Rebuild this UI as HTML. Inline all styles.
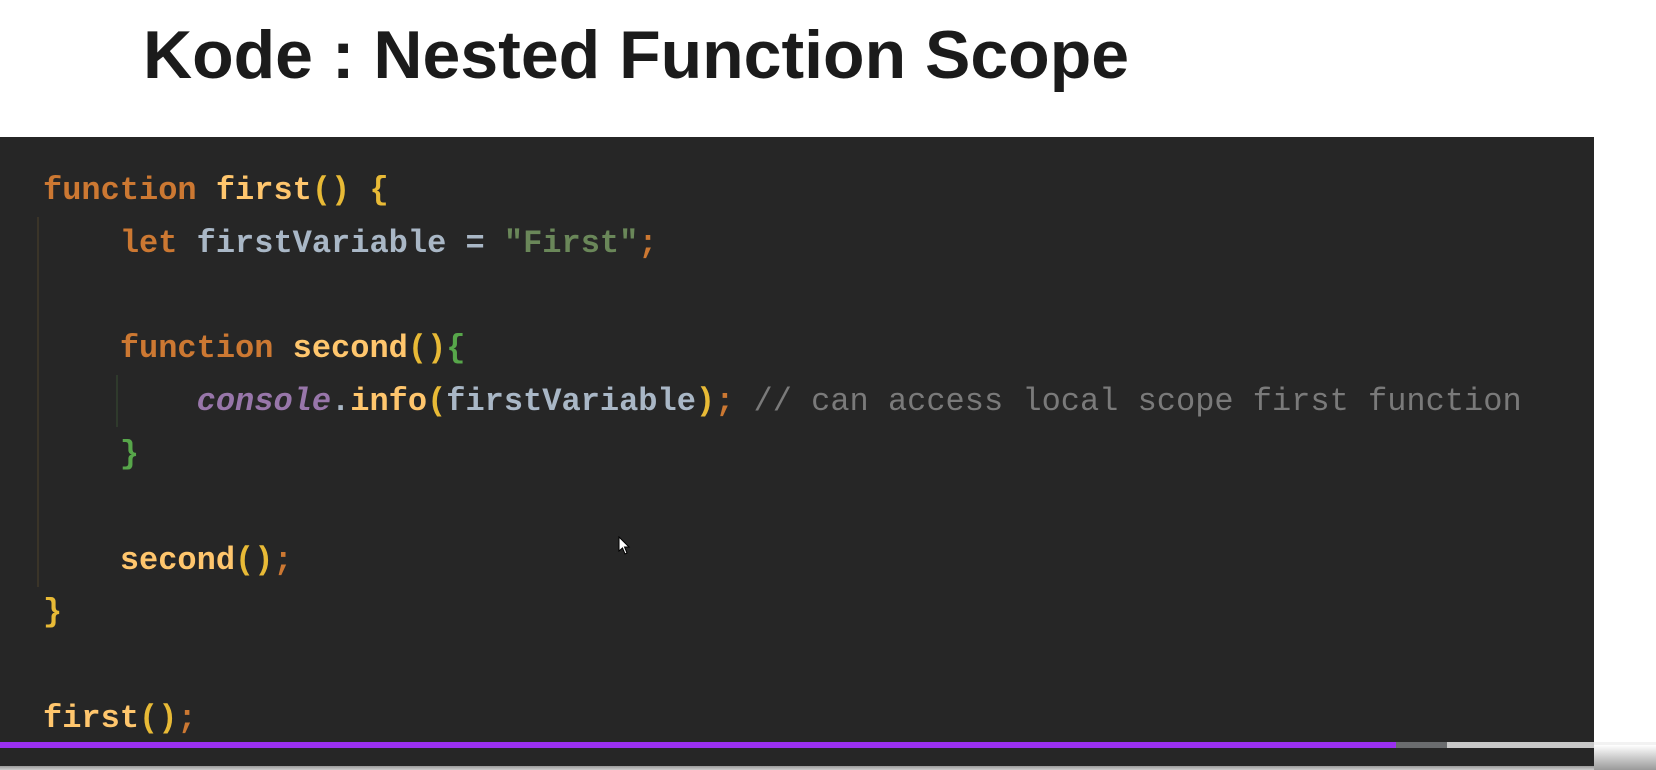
<!DOCTYPE html>
<html><head><meta charset="utf-8"><style>
html,body{margin:0;padding:0;}
body{width:1656px;height:770px;background:#fff;position:relative;overflow:hidden;font-family:"Liberation Sans",sans-serif;}
.title{position:absolute;left:143px;top:14px;font-size:68px;font-weight:bold;color:#1b1b1b;line-height:82px;white-space:nowrap;letter-spacing:0px;}
.panel{position:absolute;left:0;top:137px;width:1594px;height:631px;background:#262626;}
.code{position:absolute;left:43px;top:165px;font-family:"Liberation Mono",monospace;font-size:32px;font-weight:bold;line-height:52.8px;white-space:pre;color:#a9b7c6;}
.k{color:#cc7832}.f{color:#ffc66d}.p{color:#e8ba36}.g{color:#57a64a}.s{color:#6a8759}.c{color:#9876aa;font-style:italic}.cm{color:#7a7a7a;font-weight:normal}
.guide{position:absolute;width:2px;}
.bar{position:absolute;top:742px;height:6px;}
.bottom{position:absolute;left:0;top:766px;width:1594px;height:4px;background:linear-gradient(#999,#ccc);}
</style></head><body>
<div class="title">Kode : Nested Function Scope</div>
<div class="panel"></div>
<div class="guide" style="left:37px;top:217px;height:370px;background:#3a3428"></div>
<div class="guide" style="left:116px;top:375px;height:52px;background:#2f3a2c"></div>
<div class="code"><span class="k">function</span> <span class="f">first</span><span class="p">()</span> <span class="p">{</span>
    <span class="k">let</span> firstVariable = <span class="s">"First"</span><span class="k">;</span>

    <span class="k">function</span> <span class="f">second</span><span class="p">()</span><span class="g">{</span>
        <span class="c">console</span>.<span class="f">info</span><span class="p">(</span>firstVariable<span class="p">)</span><span class="k">;</span> <span class="cm">// can access local scope first function</span>
    <span class="g">}</span>

    <span class="f">second</span><span class="p">()</span><span class="k">;</span>
<span class="p">}</span>

<span class="f">first</span><span class="p">()</span><span class="k">;</span></div>
<svg style="position:absolute;left:618px;top:536px" width="14" height="20" viewBox="0 0 14 20"><path d="M1 1 L1 15 L4.5 12 L7 18 L9 17 L6.5 11 L11 11 Z" fill="#fff" stroke="#000" stroke-width="1"/></svg>
<div class="bar" style="left:0;width:1396px;background:#9b30f0"></div>
<div class="bar" style="left:1396px;width:51px;background:#6a6c6e"></div>
<div class="bar" style="left:1447px;width:147px;background:#c8c8c8"></div>
<div class="bar" style="left:1594px;width:62px;background:#f2f2f2"></div>
<div style="position:absolute;left:1594px;top:745px;width:62px;height:25px;background:linear-gradient(#fff,#9a9a9a)"></div>
<div class="bottom"></div>
</body></html>
